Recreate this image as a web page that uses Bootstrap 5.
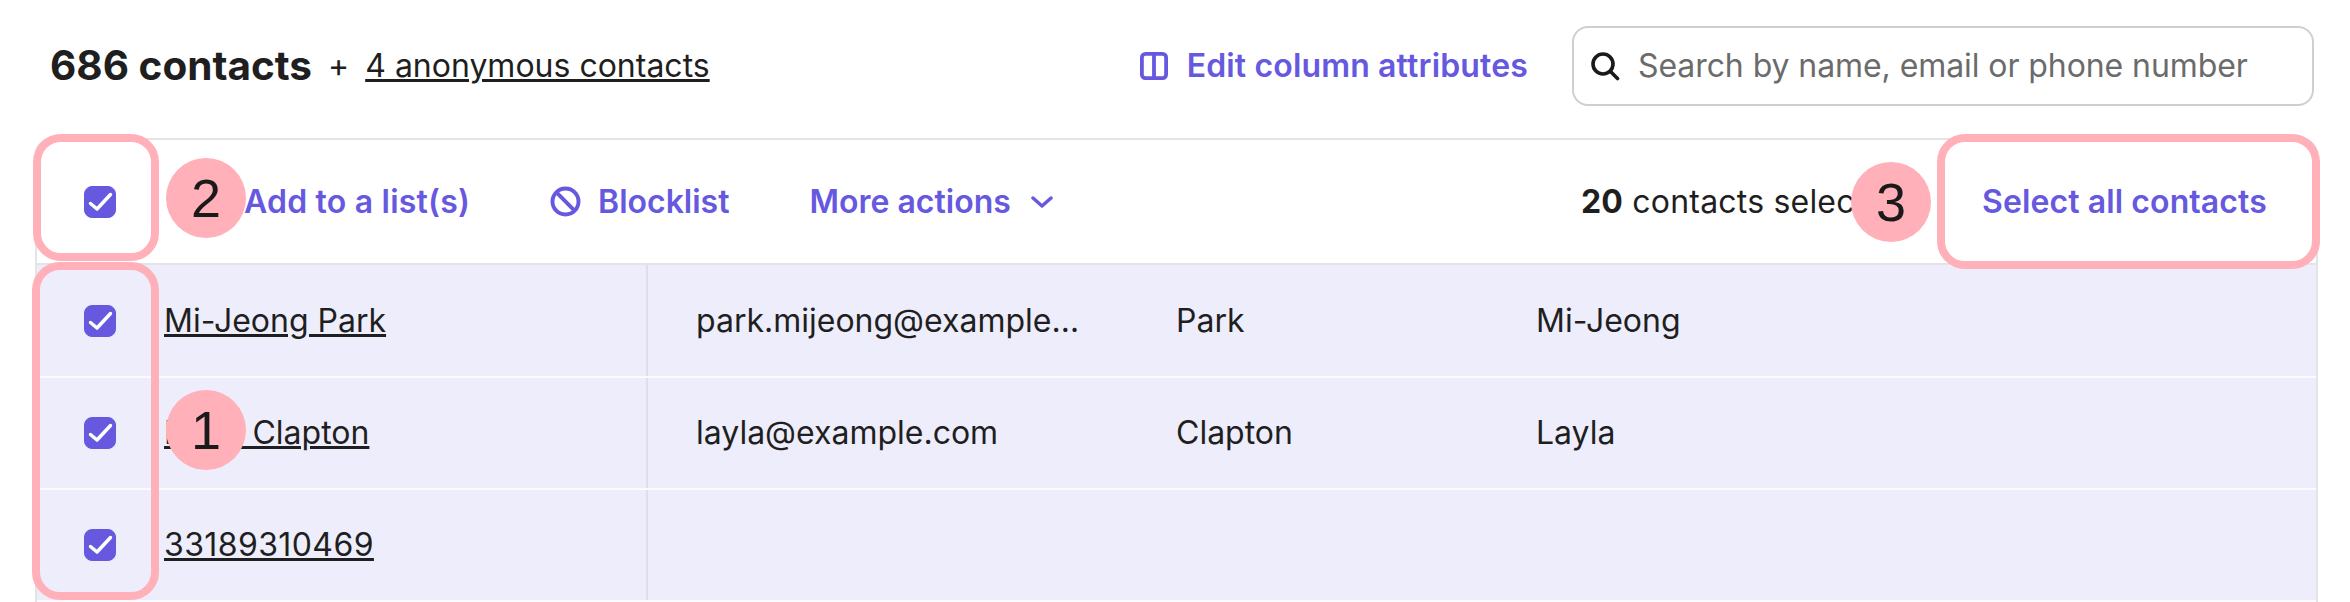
<!doctype html>
<html lang="en">
<head>
<meta charset="utf-8">
<title>Contacts</title>
<link href="https://cdn.jsdelivr.net/npm/bootstrap@5.3.0/dist/css/bootstrap.min.css" rel="stylesheet">
<style>
html,body{height:602px;overflow:hidden;background:#fff}
body{font-family:Inter,"Liberation Sans",sans-serif;font-size:32px;color:#1f1f1f;line-height:48px}
.page-wrap{position:relative;width:2350px;height:602px;padding:26px 32px 0 35px}
.top-bar{height:80px;margin-bottom:32px;padding:0 4px 0 15px}
.top-count{font-size:40.5px;font-weight:700;margin-right:16px;line-height:1}
.top-plus{margin-right:16px;font-size:32px}
.top-link{color:#1f1f1f}
.edit-link{color:#6659e0;font-weight:600;letter-spacing:.15px;text-decoration:none;margin-right:44px;gap:19px}
.search-box{width:742px;height:80px;border:2px solid #cfcfcf;border-radius:16px;padding-left:16px;gap:18px;background:#fff}
.search-box .form-control{border:0;padding:0;font-size:32px;letter-spacing:-.08px;color:#1f1f1f;background:transparent;box-shadow:none;line-height:48px}
.search-box .form-control::placeholder{color:#6b6b6b;opacity:1}
.list-frame{border:2px solid #e4e4e4;border-bottom:0;border-radius:16px 16px 0 0;height:464px;overflow:hidden}
.action-bar{height:125px;border-bottom:2px solid #e4e4e4;padding-left:47px;background:#fff}
.action-link{color:#6659e0;font-weight:600;text-decoration:none}
.action-first{margin-left:128px;letter-spacing:.2px}
.action-gap1{margin-left:80px;gap:17px}
.action-gap2{margin-left:80px;gap:20px}
.selected-note{margin-left:auto;width:355px;white-space:nowrap;overflow:hidden;letter-spacing:.2px}
.select-all{width:380px;padding-left:46px;flex:none}
.select-all .action-link{letter-spacing:.1px}
.form-check-input.tick{width:32px;height:32px;margin:0;border-radius:8px;flex:none;float:none;background-color:#6659e0;border-color:#6659e0;background-size:32px 32px;background-image:url("data:image/svg+xml,%3csvg xmlns='http://www.w3.org/2000/svg' viewBox='0 0 32 32'%3e%3cpath fill='none' stroke='%23fff' stroke-linecap='round' stroke-linejoin='round' stroke-width='3.5' d='M6.5 17.5 13 23 26.5 8.5'/%3e%3c/svg%3e")}
.contact-table{table-layout:fixed;width:2280px;margin:0;border-collapse:collapse}
.contact-table td{height:112px;padding:0;background:#eeedfb;color:#1f1f1f;box-shadow:none;border:0;border-bottom:2px solid #fbfbfe;vertical-align:middle;white-space:nowrap;overflow:hidden;text-overflow:ellipsis}
.contact-table td.cell-check{width:127px;padding-left:47px}
.contact-table td.cell-name{width:483px;border-right:2px solid #dfdfe9}
.contact-table td.cell-email{width:481px;padding:0 48px 0 48px}
.contact-table td.cell-last{width:360px;padding-left:48px}
.contact-table td.cell-first{padding-left:48px}
.contact-table a{color:#1f1f1f}
.num-link{letter-spacing:.4px}
.note-ring{position:absolute;border:8px solid #ffb0b9;border-radius:28px;pointer-events:none}
.ring-head{left:33px;top:134px;width:126px;height:127px}
.ring-rows{left:32px;top:262px;width:127px;height:338px}
.ring-all{left:1937px;top:134px;width:383px;height:135px}
.note-dot{position:absolute;width:80px;height:80px;border-radius:50%;background:#ffb0b9;color:#1a1a1a;font-family:"Liberation Sans",sans-serif;font-size:54px;line-height:80px;text-align:center}
.dot-one{left:166px;top:390px}
.dot-two{left:166px;top:158px}
.dot-three{left:1851px;top:162px}
</style>
</head>
<body>
<div class="page-wrap">
  <div class="top-bar d-flex align-items-center">
    <span class="top-count">686 contacts</span>
    <span class="top-plus">+</span>
    <a class="top-link" href="#">4 anonymous contacts</a>
    <a class="edit-link d-flex align-items-center ms-auto" href="#">
      <svg width="28" height="28" viewBox="0 0 28 28" fill="none" stroke="#6659e0" stroke-width="3.8"><rect x="1.9" y="1.9" width="24.2" height="24.2" rx="3.5"/><path d="M14 2v24"/></svg>
      Edit column attributes
    </a>
    <div class="search-box d-flex align-items-center">
      <svg class="flex-shrink-0" width="30" height="30" viewBox="0 0 30 30" fill="none" stroke="#1a1a1a" stroke-width="3.6" stroke-linecap="round"><circle cx="13" cy="13" r="10"/><path d="m20.5 20.5 7 7"/></svg>
      <input class="form-control" type="text" placeholder="Search by name, email or phone number">
    </div>
  </div>
  <div class="list-frame">
    <div class="action-bar d-flex align-items-center">
      <input class="form-check-input tick" type="checkbox" checked aria-label="Select page">
      <a class="action-link action-first" href="#">Add to a list(s)</a>
      <a class="action-link action-gap1 d-flex align-items-center" href="#">
        <svg width="31" height="31" viewBox="0 0 30 30" fill="none" stroke="#6659e0" stroke-width="3.8"><circle cx="15" cy="15" r="12.6"/><path d="m6 6 18 18"/></svg>
        Blocklist
      </a>
      <a class="action-link action-gap2 d-flex align-items-center" href="#">
        More actions
        <svg width="22" height="14" viewBox="0 0 22 14" fill="none" stroke="#6659e0" stroke-width="3.4" stroke-linecap="round" stroke-linejoin="round"><path d="m2 3 9 8 9-8"/></svg>
      </a>
      <div class="selected-note"><strong class="fw-bold">20</strong> contacts selected</div>
      <div class="select-all"><a class="action-link" href="#">Select all contacts</a></div>
    </div>
    <table class="table contact-table">
      <tbody>
        <tr>
          <td class="cell-check"><input class="form-check-input tick d-block" type="checkbox" checked aria-label="Select Mi-Jeong Park"></td>
          <td class="cell-name"><a href="#">Mi-Jeong Park</a></td>
          <td class="cell-email">park.mijeong@example.com</td>
          <td class="cell-last">Park</td>
          <td class="cell-first">Mi-Jeong</td>
        </tr>
        <tr>
          <td class="cell-check"><input class="form-check-input tick d-block" type="checkbox" checked aria-label="Select Layla Clapton"></td>
          <td class="cell-name"><a href="#">Layla Clapton</a></td>
          <td class="cell-email">layla@example.com</td>
          <td class="cell-last">Clapton</td>
          <td class="cell-first">Layla</td>
        </tr>
        <tr>
          <td class="cell-check"><input class="form-check-input tick d-block" type="checkbox" checked aria-label="Select 33189310469"></td>
          <td class="cell-name"><a class="num-link" href="#">33189310469</a></td>
          <td class="cell-email"></td>
          <td class="cell-last"></td>
          <td class="cell-first"></td>
        </tr>
      </tbody>
    </table>
  </div>
  <div class="note-ring ring-head"></div>
  <div class="note-ring ring-rows"></div>
  <div class="note-ring ring-all"></div>
  <div class="note-dot dot-one">1</div>
  <div class="note-dot dot-two">2</div>
  <div class="note-dot dot-three">3</div>
</div>
<script src="https://cdn.jsdelivr.net/npm/bootstrap@5.3.0/dist/js/bootstrap.bundle.min.js"></script>
</body>
</html>
